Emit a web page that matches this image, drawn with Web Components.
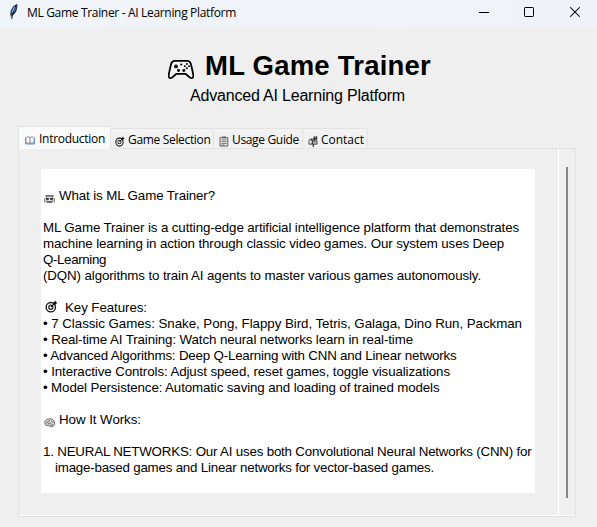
<!DOCTYPE html>
<html lang="en"><head><meta charset="utf-8"><title>ML Game Trainer - AI Learning Platform</title>
<style>html,body{margin:0;height:100%;overflow:hidden;background:#efefef}</style></head>
<body><trainer-window></trainer-window>
<script>
const define=(name,html,setup)=>customElements.define(name,class extends HTMLElement{
  connectedCallback(){
    if(this.shadowRoot)return;
    this.attachShadow({mode:'open'}).innerHTML=html;
    if(setup)setup(this,this.shadowRoot);
  }
});

/* One line of text, spaced to fill the advance width given in "w". */
define('fit-text',`<style>:host{display:inline-block;white-space:pre}span{display:inline-block}</style><span><slot></slot></span>`,
(host,root)=>{
  const s=root.querySelector('span'),w=+host.getAttribute('w');
  const n=host.textContent.length,now=s.getBoundingClientRect().width;
  if(w&&now){s.style.letterSpacing=((w-now)/n)+'px'}
});

const target=`<circle cx="6.7" cy="8.3" r="5.4" fill="#fff" stroke="#151515" stroke-width="1.6"/><circle cx="6.7" cy="8.3" r="2.4" fill="none" stroke="#222" stroke-width="1.4"/><path d="M6.7 8.3L11 4" fill="none" stroke="#111" stroke-width="1.3"/><path d="M9.6 5.4V3L12 .6 12.5 2.5 14.4 3 12 5.4z" fill="#111"/>`;
const icons={
 feather:['0 0 12 18',`<path d="M2.3 15C0 9 4 2.2 10 1 10.5 7 8 12 3.5 13.2z" fill="#26364c"/><path d="M3 11.3C3.3 7 5.5 3.5 8.8 2.3 8.6 6.7 6.5 10.6 3 11.3z" fill="#5798e4"/><path d="M8.8 2L4.2 12 3.2 17" fill="none" stroke="#111" stroke-width="1.1"/><path d="M7 4.5L4 9.5" stroke="#b6dcff" stroke-width=".7"/>`],
 pad:['0 0 26 22',`<path d="M7 2C4.5 2 3.2 4 2.7 7L.9 15.5C.2 18.6 1 20 2.8 20 4.3 20 5.3 18.5 8.2 15.5H17.8C20.7 18.5 21.7 20 23.2 20 25 20 25.8 18.6 25.1 15.5L23.3 7C22.8 4 21.5 2 19 2z" fill="#f5f5f5" stroke="#000" stroke-width="1.8"/><circle cx="8" cy="7.8" r="2" fill="#000"/><circle cx="10.5" cy="12" r="1.5" fill="#000"/><circle cx="15.8" cy="12" r="1.5" fill="#000"/><g fill="#000"><circle cx="18.8" cy="5.2" r="1"/><circle cx="16.8" cy="7.5" r="1"/><circle cx="21" cy="7.5" r="1"/><circle cx="18.8" cy="9.7" r="1"/><circle cx="13.2" cy="5.8" r="1.1"/></g>`],
 book:['0 0 11 9',`<path d="M1 1.5Q3.5 0 5.5 1.5 7.5 0 10 1.5V7.3Q7.5 6.5 5.5 7.5 3.5 6.5 1 7.3z" fill="#f4f9ff" stroke="#6a7585" stroke-width=".8"/><path d="M5.5 1.5V7.3" stroke="#665b54" stroke-width=".8"/><path d="M.4 2V8H4.5L5.5 8.5 6.5 8H10.6V2" fill="none" stroke="#4977b8" stroke-width=".8"/>`],
 target:['0 0 15 15',target],
 list:['0 0 10 12',`<path d="M1 1.7H8.8V11H1z" fill="#e4e4e4" stroke="#6c5550"/><path d="M3 .5H7V2.5H3z" fill="#666"/><path d="M2.5 4.2H7.5M2.5 6.2H7.5M2.5 8.2H7.5M2.5 9.8H5.5" stroke="#66727d" stroke-width=".9"/>`],
 mail:['0 0 11 11',`<path d="M1 5.2Q1 3 3 3H7.5Q10 3 10 5.5V8.2H1z" fill="#abb5be" stroke="#555"/><path d="M4.8 8V5Q4.8 3.3 3 3.3" fill="none" stroke="#222"/><path d="M5.8 8V11M6.8 5V1H9.5V2.8H6.8" fill="none" stroke="#222" stroke-width="1.2"/><path d="M1.8 5H3.5V7H1.8z" fill="#f5f5f5"/><path d="M6 5.5H9" stroke="#4a7896"/>`],
 robot:['0 0 11 10',`<path d="M2.5 2H8.5V8H2.5z" fill="#ddd" stroke="#777" stroke-width=".7"/><path d="M.8 4V8.5M10.2 4V8.5M1 1.5L3 2.7M10 1.5L8 2.7" stroke="#333" stroke-width=".8"/><path d="M2.5 1.8H8.5" stroke="#222" stroke-width=".8"/><path d="M2.4 4H4.7V5.8H2.4zM6.3 4H8.6V5.8H6.3z" fill="#111"/><path d="M3 8H8" stroke="#111"/>`],
 brain:['0 0 11 10',`<path d="M1 5.5C0 3 2 1 4.5 1.2 7.5 0 10.5 2 10.4 5 11 7.4 9 9.4 7 8.5 5.3 8.5 4.5 7 2.5 7.4 1.4 7.2 1 6.5 1 5.5z" fill="#d8d2ce" stroke="#5b5754" stroke-width=".9"/><path d="M2.5 5.5Q2.5 3.5 4.3 3.7L5.5 2.2M4 6L6 5 7 6.8M7 3L8.5 4.2 9.5 3.5M7.5 7.8L8.8 6.1" fill="none" stroke="#595450" stroke-width=".8"/>`],
 min:['0 0 10 10','<path d="M0 5.5H10" stroke="#000"/>'],
 max:['0 0 10 10','<rect x=".5" y=".5" width="9" height="9" rx=".7" fill="none" stroke="#000"/>'],
 close:['0 0 10 10','<path d="M.2 .2L9.8 9.8M9.8 .2L.2 9.8" stroke="#111" stroke-width="1.05"/>']
};
define('glyph-icon','<style>:host{display:block;flex:none}svg{display:block;width:100%;height:100%}</style>',(host,root)=>{
  const [v,p]=icons[host.getAttribute('name')];
  root.innerHTML+=`<svg viewBox="${v}" preserveAspectRatio="none">${p}</svg>`;
});

define('title-bar',`<style>:host{display:flex;height:28px;box-sizing:border-box;background:linear-gradient(90deg,#eff4f8,#f0f2f9);font:12px/16px "Open Sans","Noto Sans",sans-serif;padding:4px 17px 0 9px}
fit-text{margin-top:1px}.f{width:10px;height:17px;margin:-1px 8px 0 0}.b{display:flex;gap:36px;margin:3px 0 0 auto}.b glyph-icon{width:10px;height:10px}.b glyph-icon:nth-child(2){margin-left:-1px}</style>
<glyph-icon class="f" name="feather"></glyph-icon><fit-text w="209">ML Game Trainer - AI Learning Platform</fit-text><div class="b"><glyph-icon name="min"></glyph-icon><glyph-icon name="max"></glyph-icon><glyph-icon name="close"></glyph-icon></div>`);

define('app-header',`<style>:host{display:block;height:98px;box-sizing:border-box;padding-top:21px;font-family:"Liberation Sans",Arial,sans-serif;color:#000}
.t{display:flex;height:35px;padding-left:168px;font-weight:bold;font-size:27.5px;line-height:34px}.t glyph-icon{width:26px;height:21px;margin:10px 11px 0 0}.s{padding-left:190px;font-size:16px;line-height:20px;margin-top:2px}</style>
<div class="t"><glyph-icon name="pad"></glyph-icon><fit-text w="226">ML Game Trainer</fit-text></div><div class="s"><fit-text w="215">Advanced AI Learning Platform</fit-text></div>`);

define('tab-item',`<style>:host{display:flex;box-sizing:border-box;height:21px;border:1px solid #e3e3e3;border-left:0;background:#f2f2f2;font:12px/16px "Open Sans","Noto Sans",sans-serif;padding:3px 0 0 4px}
:host([active]){height:23px;border-left:1px solid #e3e3e3;border-bottom:0;background:#fafafa;padding:4px 0 0 6px}
glyph-icon{width:10px;height:11px;margin:4px 3px 0 0}:host([active]) glyph-icon{height:9px;margin:5px 4px 0 0}</style><slot name="none"></slot><slot></slot>`,(h,r)=>{
  const g=document.createElement('glyph-icon');
  g.setAttribute('name',h.getAttribute('icon'));
  r.querySelector('slot[name]').replaceWith(g);
});

define('text-row',`<style>:host{display:flex;height:16px;font:13.33px/16px "Liberation Sans",Arial,sans-serif;color:#000;white-space:pre}</style><slot></slot>`);

define('intro-document',`<style>:host{display:block;box-sizing:border-box;width:494px;height:324px;background:#fff;padding:19px 0 0 2px}
glyph-icon{width:11px;height:10px;margin:6px 4px 0 1px}glyph-icon.k{width:13px;height:13px;margin:0 7px 0 2px}.i{padding-left:12px}</style>
<text-row><glyph-icon name="robot"></glyph-icon><fit-text w="156">What is ML Game Trainer?</fit-text></text-row><text-row></text-row>
<text-row><fit-text w="476">ML Game Trainer is a cutting-edge artificial intelligence platform that demonstrates</fit-text></text-row>
<text-row><fit-text w="461">machine learning in action through classic video games. Our system uses Deep</fit-text></text-row>
<text-row><fit-text w="63">Q-Learning</fit-text></text-row>
<text-row><fit-text w="438">(DQN) algorithms to train AI agents to master various games autonomously.</fit-text></text-row><text-row></text-row>
<text-row><glyph-icon class="k" name="target"></glyph-icon><fit-text w="82">Key Features:</fit-text></text-row>
<text-row><fit-text w="479">• 7 Classic Games: Snake, Pong, Flappy Bird, Tetris, Galaga, Dino Run, Packman</fit-text></text-row>
<text-row><fit-text w="370">• Real-time AI Training: Watch neural networks learn in real-time</fit-text></text-row>
<text-row><fit-text w="413.5">• Advanced Algorithms: Deep Q-Learning with CNN and Linear networks</fit-text></text-row>
<text-row><fit-text w="407">• Interactive Controls: Adjust speed, reset games, toggle visualizations</fit-text></text-row>
<text-row><fit-text w="396.5">• Model Persistence: Automatic saving and loading of trained models</fit-text></text-row><text-row></text-row>
<text-row><glyph-icon name="brain"></glyph-icon><fit-text w="82">How It Works:</fit-text></text-row><text-row></text-row>
<text-row><fit-text w="488.5">1. NEURAL NETWORKS: Our AI uses both Convolutional Neural Networks (CNN) for</fit-text></text-row>
<text-row class="i"><fit-text w="379">image-based games and Linear networks for vector-based games.</fit-text></text-row>`);

define('scroll-bar',`<style>:host{display:block;box-sizing:border-box;width:17px;border-left:1px solid #fff;padding:18px 0 18px 7px}i{display:block;width:2px;height:100%;background:#858585}</style><i></i>`);

define('tab-book',`<style>:host{display:block;padding:0 21px 0 18px}.tabs{display:flex;align-items:flex-end;height:23px;margin-bottom:-1px;position:relative}
.pane{box-sizing:border-box;width:558px;height:369px;border:1px solid #e3e3e3;box-shadow:inset 0 -1px #fff;display:flex;justify-content:space-between}intro-document{margin:20px 0 0 22px}</style>
<div class="tabs"><tab-item active icon="book" style="width:93px"><fit-text w="66">Introduction</fit-text></tab-item><tab-item icon="target" style="width:103px"><fit-text w="82.5">Game Selection</fit-text></tab-item><tab-item icon="list" style="width:89px;padding-left:5px"><fit-text w="67">Usage Guide</fit-text></tab-item><tab-item icon="mail" style="width:65px;padding-left:5px"><fit-text w="43">Contact</fit-text></tab-item></div>
<div class="pane"><intro-document></intro-document><scroll-bar></scroll-bar></div>`);

define('trainer-window',`<style>:host{display:block;width:597px;height:527px;background:#efefef;color:#000;overflow:hidden}</style><title-bar></title-bar><app-header></app-header><tab-book></tab-book>`);
</script></body></html>
